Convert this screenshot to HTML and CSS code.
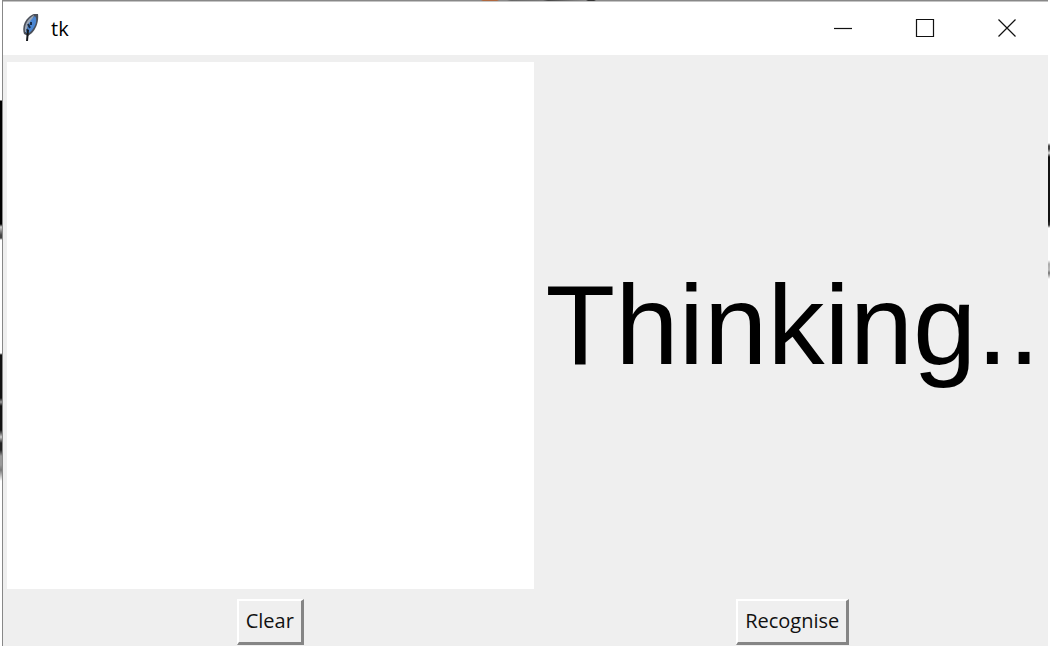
FILE: index.html
```html
<!DOCTYPE html>
<html lang="en">
<head>
<meta charset="utf-8">
<title>tk</title>
<meta name="viewport" content="width=device-width, initial-scale=1">
<link rel="stylesheet" href="styles.css">
</head>
<body class="desktop">
  <div class="edge edge-left"></div>
  <main class="window">
    <header class="titlebar">
      <svg class="feather" viewBox="0 0 20 30" aria-hidden="true">
        <path d="M3 20C1 14 3 7 8 3C11 0 15 -1 17 0C18 8 15 15 11 19L7 22Z" fill="#4b505a"/>
        <path d="M4 18C3 12 6 5 13 1L12 5C8 9 6 13 5 18Z" fill="#9ca6b5"/>
        <path d="M5 19C6 12 9 6 14 2L15 4C16 9 13 15 8 19Z" fill="#4a86d2"/>
        <path d="M7 10L9 14M6 15L7 17M10 8L10 11" stroke="#182c48" stroke-width="2"/>
        <path d="M7 16L6 27" fill="none" stroke="#15181d" stroke-width="2"/>
      </svg>
      <h1 class="title">tk</h1>
      <div class="controls">
        <button class="control" type="button" aria-label="Minimize">
          <svg viewBox="0 0 20 20" aria-hidden="true"><path d="M1 10.500H19"/></svg>
        </button>
        <button class="control" type="button" aria-label="Maximize">
          <svg viewBox="0 0 20 20" aria-hidden="true"><path d="M1.500 1.500H18.500V18.500H1.500Z"/></svg>
        </button>
        <button class="control" type="button" aria-label="Close">
          <svg viewBox="0 0 20 20" aria-hidden="true"><path d="M1.500 1.500L18.500 18.500M18.500 1.500L1.500 18.500"/></svg>
        </button>
      </div>
    </header>
    <section class="content">
      <canvas class="drawing" aria-label="Drawing area"></canvas>
      <output class="status">Thinking..</output>
      <button class="action" type="button">Clear</button>
      <button class="action" type="button">Recognise</button>
    </section>
  </main>
  <div class="edge edge-right"></div>
</body>
</html>
```
FILE: styles.css
```css
* {
  box-sizing: border-box;
}

.desktop {
  display: flex;
  min-height: 100vh;
  margin: 0;
  background: #fff;
  color: #000;
  font-family: "Open Sans", "Noto Sans", sans-serif;
}

.edge {
  flex: 0 0 2px;
}

.edge-left {
  background: linear-gradient(#fff 100px, #000 101px 224px, #ccc 227px, #444 235px 238px, #fff 240px 353px, #111 355px 398px, #999 402px, #111 406px 430px, #ccc 437px, #222 443px 450px, #999 456px 465px, #777 470px, #fff 481px);
}

.edge-right {
  background: linear-gradient(#fff 143px, #444 146px 149px, #ddd 153px, #111 157px 221px, #333 225px, #fff 228px 260px, #aaa 264px, #bbb 270px, #777 273px, #fff 279px);
}

.window {
  display: flex;
  flex: 1;
  flex-direction: column;
  min-width: 0;
  border-left: 1px solid #888;
  background: #efefef;
}

.window::before {
  content: "";
  height: 1px;
  background: linear-gradient(90deg, #888 478px, #b0683f 480px 494px, #888 496px 504px, #666 508px, #777 540px, #444 545px, #777 570px, #888 583px, #333 585px 591px, #888 593px);
}

.titlebar {
  display: flex;
  align-items: center;
  height: 54px;
  padding-left: 18px;
  border-top: 1px solid #c4c4c4;
  background: #fff;
}

.feather {
  width: 20px;
  height: 30px;
}

.title {
  margin: 0 0 0 10px;
  font-size: 20px;
  font-weight: 400;
  line-height: 28px;
}

.controls {
  display: flex;
  margin-left: auto;
}

.control {
  display: grid;
  place-items: center;
  width: 82px;
  height: 52px;
  padding: 0 0 2px;
  border: 0;
  background: transparent;
}

.control svg {
  width: 20px;
  height: 20px;
  fill: none;
  stroke: #111;
  stroke-width: 1.2;
}

.content {
  display: grid;
  grid-template-columns: minmax(0, 534fr) minmax(0, 510fr);
  align-items: center;
  justify-items: center;
  row-gap: 10px;
  padding-top: 7px;
}

.drawing {
  width: calc(100% - 8px);
  aspect-ratio: 1;
  background: #fff;
}

.status {
  font-family: "Liberation Sans", Arial, sans-serif;
  font-size: 114px;
  line-height: 132px;
  white-space: nowrap;
}

.action {
  height: 46px;
  padding: 0 7px;
  border: 3px solid;
  border-width: 2px 3px 3px 2px;
  border-color: #fff #858585 #858585 #fff;
  background: #efefef;
  color: #111;
  font-family: inherit;
  font-size: 20px;
  line-height: 28px;
}
```
